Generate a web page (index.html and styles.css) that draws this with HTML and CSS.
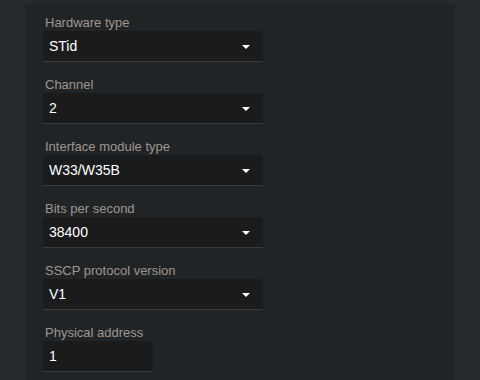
FILE: index.html
```html
<!DOCTYPE html>
<html>
<head>
<meta charset="utf-8">
<link rel="stylesheet" href="styles.css">
</head>
<body>
<div class="panel">
  <div class="field">
    <div class="label">Hardware type</div>
    <div class="select"><span>STid</span><i class="caret"></i></div>
  </div>
  <div class="field">
    <div class="label">Channel</div>
    <div class="select"><span>2</span><i class="caret"></i></div>
  </div>
  <div class="field">
    <div class="label">Interface module type</div>
    <div class="select"><span>W33/W35B</span><i class="caret"></i></div>
  </div>
  <div class="field">
    <div class="label">Bits per second</div>
    <div class="select"><span>38400</span><i class="caret"></i></div>
  </div>
  <div class="field">
    <div class="label">SSCP protocol version</div>
    <div class="select"><span>V1</span><i class="caret"></i></div>
  </div>
  <div class="field">
    <div class="label">Physical address</div>
    <div class="select input"><span>1</span></div>
  </div>
</div>
</body>
</html>
```
FILE: styles.css
```css
html, body {
  margin: 0;
  padding: 0;
  height: 100%;
  overflow: hidden;
}
body {
  background: #272a2d;
  font-family: "Liberation Sans", Arial, sans-serif;
}
.panel {
  margin: 3px 0 0 25px;
  width: 430px;
  height: 377px;
  background: #212427;
  padding: 12px 0 0 18px;
  box-sizing: border-box;
  display: flex;
  flex-direction: column;
  gap: 15px;
}
.field {
  display: flex;
  flex-direction: column;
}
.label {
  font-size: 13px;
  line-height: 16px;
  color: #9f978f;
  padding-left: 2px;
}
.select {
  width: 220px;
  height: 31px;
  box-sizing: border-box;
  background: #1a1b1d;
  border-bottom: 1px solid #3a3c3e;
  border-radius: 2px 2px 0 0;
  display: flex;
  align-items: center;
  justify-content: space-between;
  padding: 0 13px 0 6px;
  color: #ffffff;
  font-size: 14px;
  line-height: 30px;
}
.select.input {
  width: 110px;
}
.caret {
  width: 0;
  height: 0;
  border-left: 4px solid transparent;
  border-right: 4px solid transparent;
  border-top: 4px solid #ffffff;
  margin-top: 1px;
}
```
